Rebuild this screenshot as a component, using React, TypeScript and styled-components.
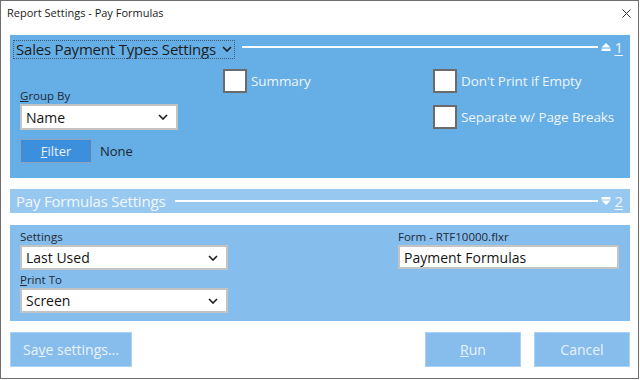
import styled, { createGlobalStyle } from "styled-components";

const GlobalStyle = createGlobalStyle`
  html, body {
    margin: 0;
    padding: 0;
    background: #ffffff;
  }
  body {
    font-family: "Open Sans", "Noto Sans", sans-serif;
  }
`;

const Window = styled.div`
  box-sizing: border-box;
  width: 639px;
  height: 379px;
  border: 1px solid #6e6e6e;
  background: #ffffff;
  display: flex;
  flex-direction: column;
`;

const TitleBar = styled.div`
  height: 34px;
  display: flex;
  align-items: flex-start;
  justify-content: space-between;
  padding: 4px 8px 0 6px;
  box-sizing: border-box;
`;

const Title = styled.span`
  font-size: 11px;
  color: #1b1b1b;
`;

const CloseGlyph = styled.svg`
  margin-top: 4px;
  margin-right: -1px;
`;

const Content = styled.div`
  display: flex;
  flex-direction: column;
  padding: 0 8px 0 9px;
`;

const Panel = styled.div<{ $bg: string }>`
  background: ${({ $bg }) => $bg};
`;

const HeaderRow = styled.div<{ $height: number }>`
  display: flex;
  align-items: center;
  height: ${({ $height }) => $height}px;
  padding: 0 7px 0 3px;
`;

const HeaderToggle = styled.div<{ $focused?: boolean; $light?: boolean }>`
  display: flex;
  align-items: center;
  gap: 6px;
  height: 19px;
  padding: 0 3px 0 3px;
  margin-top: ${({ $focused }) => ($focused ? "4px" : "0")};
  outline: ${({ $focused }) => ($focused ? "1px dotted #3e5b78" : "none")};
  outline-offset: -1px;
  font-size: 15px;
  letter-spacing: -0.2px;
  color: ${({ $light }) => ($light ? "#f2f7fd" : "#1c1c1c")};
  white-space: nowrap;
`;

const Rule = styled.div`
  flex: 1;
  height: 2px;
  background: #ffffff;
  margin-left: 7px;
  margin-right: 3px;
`;

const SectionNumber = styled.span`
  font-size: 15px;
  color: #f2f7fd;
  text-decoration: underline;
  text-underline-offset: 2px;
  margin-left: 3px;
`;

const Body1 = styled.div`
  display: flex;
  padding: 10px 0 15px 10px;
`;

const Column = styled.div<{ $width?: number; $top?: number; $gap?: number }>`
  display: flex;
  flex-direction: column;
  width: ${({ $width }) => ($width ? `${$width}px` : "auto")};
  padding-top: ${({ $top }) => $top ?? 0}px;
  gap: ${({ $gap }) => $gap ?? 0}px;
`;

const FieldLabel = styled.label<{ $spaced?: boolean }>`
  font-size: 11.5px;
  color: #1f2a36;
  line-height: 14px;
  margin-top: ${({ $spaced }) => ($spaced ? "3px" : "0")};
  margin-bottom: 1px;
`;

const SelectBox = styled.div<{ $width: number; $height: number }>`
  box-sizing: border-box;
  width: ${({ $width }) => $width}px;
  height: ${({ $height }) => $height}px;
  border: 2px solid #c3c3c3;
  background: #ffffff;
  display: flex;
  align-items: center;
  justify-content: space-between;
  padding: 0 8px 0 4px;
  font-size: 14px;
  color: #141414;
`;

const FilterRow = styled.div`
  display: flex;
  align-items: center;
  gap: 8px;
  margin-top: 9px;
`;

const FilterButton = styled.button`
  box-sizing: border-box;
  width: 72px;
  height: 24px;
  border: 1px solid #8aa2bb;
  background: #3b8fdd;
  color: #e8f1fb;
  font-family: inherit;
  font-size: 13px;
  padding: 0;
`;

const NoneText = styled.span`
  font-size: 13px;
  color: #1c2530;
`;

const CheckRow = styled.div`
  display: flex;
  align-items: center;
  gap: 4px;
  height: 24px;
`;

const CheckBox = styled.div`
  box-sizing: border-box;
  width: 24px;
  height: 24px;
  border: 2px solid #6b6b6b;
  background: #ffffff;
`;

const CheckLabel = styled.span`
  font-size: 13.5px;
  color: #eef5fc;
  letter-spacing: -0.1px;
`;

const Gap = styled.div<{ $h: number }>`
  height: ${({ $h }) => $h}px;
`;

const Body2 = styled.div`
  display: flex;
  justify-content: space-between;
  padding: 5px 11px 8px 10px;
`;

const Footer = styled.div`
  display: flex;
  align-items: center;
  gap: 13px;
  margin-top: 11px;
`;

const ActionButton = styled.button<{ $width: number }>`
  box-sizing: border-box;
  width: ${({ $width }) => $width}px;
  height: 35px;
  border: 1px solid #a9d2f4;
  background: #86bdec;
  color: #eaf3fc;
  font-family: inherit;
  font-size: 14px;
  padding: 0;
`;

const Spacer = styled.div`
  flex: 1;
`;

const Chevron = () => (
  <svg width="10" height="6" viewBox="0 0 10 6">
    <path d="M1 1 L5 5 L9 1" fill="none" stroke="#1c1c1c" strokeWidth="1.6" />
  </svg>
);

const CollapseIcon = ({ up }: { up: boolean }) => (
  <svg width="10" height="10" viewBox="0 0 10 10">
    {up ? (
      <>
        <path d="M0.5 5.5 L5 1 L9.5 5.5 Z" fill="#ffffff" />
        <rect x="0.5" y="6.5" width="9" height="2.5" fill="#ffffff" />
      </>
    ) : (
      <>
        <rect x="0.5" y="1" width="9" height="2.5" fill="#ffffff" />
        <path d="M0.5 4.5 L5 9 L9.5 4.5 Z" fill="#ffffff" />
      </>
    )}
  </svg>
);

const Check = ({ label }: { label: string }) => (
  <CheckRow>
    <CheckBox />
    <CheckLabel>{label}</CheckLabel>
  </CheckRow>
);

const Select = ({ value, width, height }: { value: string; width: number; height: number }) => (
  <SelectBox $width={width} $height={height}>
    <span>{value}</span>
    <Chevron />
  </SelectBox>
);

export default function App() {
  return (
    <>
      <GlobalStyle />
      <Window>
        <TitleBar>
          <Title>Report Settings - Pay Formulas</Title>
          <CloseGlyph width="9" height="9" viewBox="0 0 9 9">
            <path d="M0.5 0.5 L8.5 8.5 M8.5 0.5 L0.5 8.5" stroke="#333" strokeWidth="1" />
          </CloseGlyph>
        </TitleBar>
        <Content>
          <Panel $bg="#65aee6">
            <HeaderRow $height={24}>
              <HeaderToggle $focused>
                Sales Payment Types Settings
                <Chevron />
              </HeaderToggle>
              <Rule />
              <CollapseIcon up />
              <SectionNumber>1</SectionNumber>
            </HeaderRow>
            <Body1>
              <Column $width={203} $top={20}>
                <FieldLabel>
                  <u>G</u>roup By
                </FieldLabel>
                <Select value="Name" width={158} height={26} />
                <FilterRow>
                  <FilterButton>
                    <u>F</u>ilter
                  </FilterButton>
                  <NoneText>None</NoneText>
                </FilterRow>
              </Column>
              <Column $width={210}>
                <Check label="Summary" />
              </Column>
              <Column $gap={12}>
                <Check label="Don't Print if Empty" />
                <Check label="Separate w/ Page Breaks" />
              </Column>
            </Body1>
          </Panel>
          <Gap $h={11} />
          <Panel $bg="#97c8f0">
            <HeaderRow $height={24}>
              <HeaderToggle $light>Pay Formulas Settings</HeaderToggle>
              <Rule />
              <CollapseIcon up={false} />
              <SectionNumber>2</SectionNumber>
            </HeaderRow>
          </Panel>
          <Gap $h={12} />
          <Panel $bg="#85bdec">
            <Body2>
              <Column>
                <FieldLabel>Settings</FieldLabel>
                <Select value="Last Used" width={208} height={25} />
                <FieldLabel $spaced>
                  <u>P</u>rint To
                </FieldLabel>
                <Select value="Screen" width={208} height={25} />
              </Column>
              <Column>
                <FieldLabel>Form - RTF10000.flxr</FieldLabel>
                <SelectBox $width={221} $height={24}>
                  <span>Payment Formulas</span>
                </SelectBox>
              </Column>
            </Body2>
          </Panel>
          <Footer>
            <ActionButton $width={122}>
              Sa<u>v</u>e settings...
            </ActionButton>
            <Spacer />
            <ActionButton $width={96}>
              <u>R</u>un
            </ActionButton>
            <ActionButton $width={96}>Cancel</ActionButton>
          </Footer>
        </Content>
      </Window>
    </>
  );
}
